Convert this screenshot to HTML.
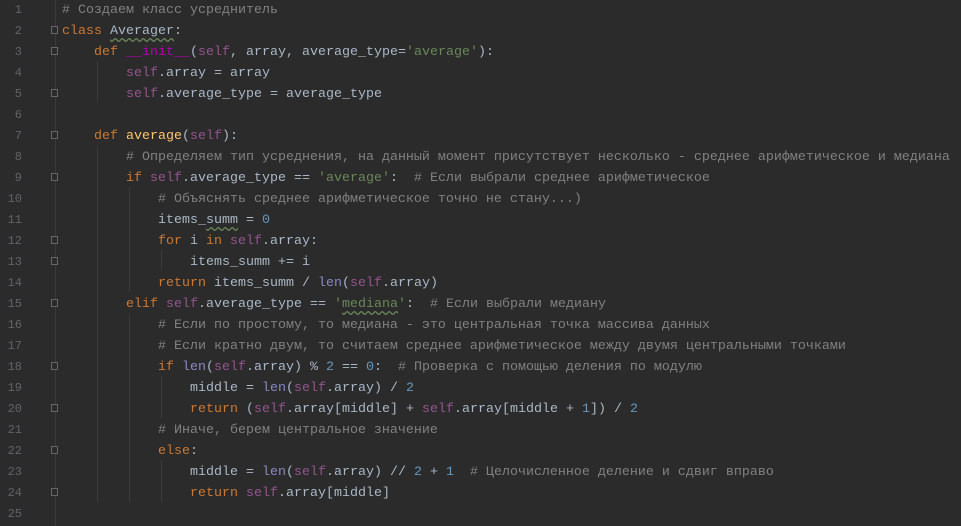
<!DOCTYPE html>
<html><head><meta charset="utf-8"><style>
html,body{margin:0;padding:0;background:#2b2b2b;width:961px;height:526px;overflow:hidden}
#g{position:absolute;left:0;top:0;width:55px;height:526px;background:#2b2b2b;border-right:1px solid #3a3a3a}
.n{position:absolute;left:0;width:22px;text-align:right;color:#606366;font:12px "Liberation Mono",monospace;}
pre{position:absolute;left:62px;top:0px;margin:0;font:13.33px/21px "Liberation Mono","DejaVu Sans Mono",monospace;color:#a9b7c6;white-space:pre}
.k{color:#cc7832}.s{color:#94558d}.c{color:#808080}.t{color:#6a8759}.m{color:#6897bb}.b{color:#8888c6}.i{color:#b200b2}
.w{text-decoration:underline wavy #6a8759;text-underline-offset:3px}
.f{position:absolute;left:51px;width:7px;height:8px;border:1px solid #666;box-sizing:border-box;background:#2b2b2b}
.gd{position:absolute;width:1px;background:#3b3b3b}
</style></head><body>
<div id="g"></div>
<div class="gd" style="left:97px;top:61px;height:42px"></div>
<div class="gd" style="left:97px;top:145px;height:357px"></div>
<div class="gd" style="left:129px;top:187px;height:105px"></div>
<div class="gd" style="left:129px;top:313px;height:189px"></div>
<div class="gd" style="left:161px;top:250px;height:21px"></div>
<div class="gd" style="left:161px;top:376px;height:42px"></div>
<div class="gd" style="left:161px;top:460px;height:42px"></div>
<pre><span class="c"># Создаем класс усреднитель</span>
<span class="k">class </span><span class="w">Averager</span>:
    <span class="k">def </span><span class="i">__init__</span>(<span class="s">self</span>, array, average_type=<span class="t">'average'</span>):
        <span class="s">self</span>.array = array
        <span class="s">self</span>.average_type = average_type

    <span class="k">def </span><span style="color:#ffc66d">average</span>(<span class="s">self</span>):
        <span class="c"># Определяем тип усреднения, на данный момент присутствует несколько - среднее арифметическое и медиана</span>
        <span class="k">if </span><span class="s">self</span>.average_type == <span class="t">'average'</span>:  <span class="c"># Если выбрали среднее арифметическое</span>
            <span class="c"># Объяснять среднее арифметическое точно не стану...)</span>
            items_<span class="w">summ</span> = <span class="m">0</span>
            <span class="k">for </span>i <span class="k">in </span><span class="s">self</span>.array:
                items_summ += i
            <span class="k">return </span>items_summ / <span class="b">len</span>(<span class="s">self</span>.array)
        <span class="k">elif </span><span class="s">self</span>.average_type == <span class="t">'<span class="w">mediana</span>'</span>:  <span class="c"># Если выбрали медиану</span>
            <span class="c"># Если по простому, то медиана - это центральная точка массива данных</span>
            <span class="c"># Если кратно двум, то считаем среднее арифметическое между двумя центральными точками</span>
            <span class="k">if </span><span class="b">len</span>(<span class="s">self</span>.array) % <span class="m">2</span> == <span class="m">0</span>:  <span class="c"># Проверка с помощью деления по модулю</span>
                middle = <span class="b">len</span>(<span class="s">self</span>.array) / <span class="m">2</span>
                <span class="k">return </span>(<span class="s">self</span>.array[middle] + <span class="s">self</span>.array[middle + <span class="m">1</span>]) / <span class="m">2</span>
            <span class="c"># Иначе, берем центральное значение</span>
            <span class="k">else</span>:
                middle = <span class="b">len</span>(<span class="s">self</span>.array) // <span class="m">2</span> + <span class="m">1</span>  <span class="c"># Целочисленное деление и сдвиг вправо</span>
                <span class="k">return </span><span class="s">self</span>.array[middle]
</pre>
<div class="n" style="top:3px">1</div><div class="n" style="top:24px">2</div><div class="n" style="top:45px">3</div><div class="n" style="top:66px">4</div><div class="n" style="top:87px">5</div><div class="n" style="top:108px">6</div><div class="n" style="top:129px">7</div><div class="n" style="top:150px">8</div><div class="n" style="top:171px">9</div><div class="n" style="top:192px">10</div><div class="n" style="top:213px">11</div><div class="n" style="top:234px">12</div><div class="n" style="top:255px">13</div><div class="n" style="top:276px">14</div><div class="n" style="top:297px">15</div><div class="n" style="top:318px">16</div><div class="n" style="top:339px">17</div><div class="n" style="top:360px">18</div><div class="n" style="top:381px">19</div><div class="n" style="top:402px">20</div><div class="n" style="top:423px">21</div><div class="n" style="top:444px">22</div><div class="n" style="top:465px">23</div><div class="n" style="top:486px">24</div><div class="n" style="top:507px">25</div>
<div class="f" style="top:26px"></div><div class="f" style="top:47px"></div><div class="f" style="top:89px"></div><div class="f" style="top:131px"></div><div class="f" style="top:173px"></div><div class="f" style="top:236px"></div><div class="f" style="top:257px"></div><div class="f" style="top:299px"></div><div class="f" style="top:362px"></div><div class="f" style="top:404px"></div><div class="f" style="top:446px"></div><div class="f" style="top:488px"></div>
</body></html>
